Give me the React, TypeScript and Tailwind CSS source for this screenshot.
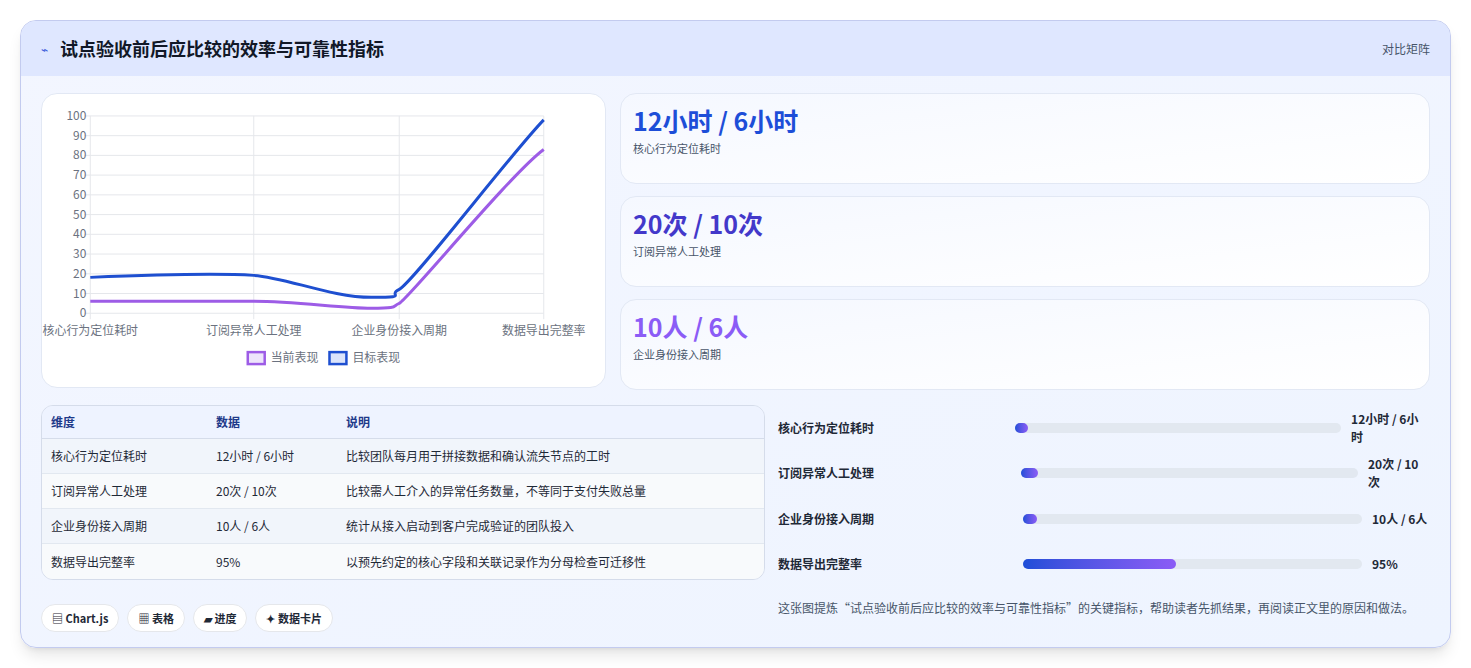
const font = { fontFamily: '"Noto Sans CJK SC", "Noto Sans", sans-serif' };

const stats = [
  { v: '12小时 / 6小时', l: '核心行为定位耗时', c: 'text-[#1d4ed8]' },
  { v: '20次 / 10次', l: '订阅异常人工处理', c: 'text-[#4338ca]' },
  { v: '10人 / 6人', l: '企业身份接入周期', c: 'text-[#8b5cf6]' },
];

const rows = [
  ['核心行为定位耗时', '12小时 / 6小时', '比较团队每月用于拼接数据和确认流失节点的工时'],
  ['订阅异常人工处理', '20次 / 10次', '比较需人工介入的异常任务数量，不等同于支付失败总量'],
  ['企业身份接入周期', '10人 / 6人', '统计从接入启动到客户完成验证的团队投入'],
  ['数据导出完整率', '95%', '以预先约定的核心字段和关联记录作为分母检查可迁移性'],
];

const bars = [
  { l: '核心行为定位耗时', v: '12小时 / 6小时', w: 4 },
  { l: '订阅异常人工处理', v: '20次 / 10次', w: 5 },
  { l: '企业身份接入周期', v: '10人 / 6人', w: 4 },
  { l: '数据导出完整率', v: '95%', w: 45 },
];

function Chart() {
  const y = (v: number) => 220 - 1.98 * v;
  const xs = [48, 212, 358, 503];
  const labels = ['核心行为定位耗时', '订阅异常人工处理', '企业身份接入周期', '数据导出完整率'];
  return (
    <svg viewBox="0 0 564 294" className="w-full h-full" style={font}>
      {[0, 10, 20, 30, 40, 50, 60, 70, 80, 90, 100].map((v) => (
        <g key={v}>
          <line x1={42} x2={503} y1={y(v)} y2={y(v)} stroke="#e5e7eb" />
          <text x={56 - 12} y={y(v) + 4} textAnchor="end" fontSize="12" fill="#6b7280">{v}</text>
        </g>
      ))}
      {xs.map((x, i) => (
        <g key={x}>
          <line x1={x} x2={x} y1={22} y2={226} stroke="#e5e7eb" />
          <text x={x} y={242} textAnchor="middle" fontSize="12" fill="#6b7280">{labels[i]}</text>
        </g>
      ))}
      <path d="M48 208 C120 208,170 208,212 208 S300 215,330 215 S350 213,358 210 S470 80,503 55.7" fill="none" stroke="#9d5ce6" strokeWidth="3" />
      <path d="M48 184 C120 181,180 180,212 182 S290 204,330 204 S345 202,358 196 S470 60,503 26" fill="none" stroke="#1e4fd0" strokeWidth="3" />
      <rect x={206} y={259} width={17} height={12} fill="#ede4fb" stroke="#9d5ce6" strokeWidth="2.5" />
      <text x={229} y={269} fontSize="12" fill="#6b7280">当前表现</text>
      <rect x={288} y={259} width={17} height={12} fill="#dbe4fb" stroke="#1e4fd0" strokeWidth="2.5" />
      <text x={311} y={269} fontSize="12" fill="#6b7280">目标表现</text>
    </svg>
  );
}

export default function App() {
  return (
    <div className="w-[1471px] h-[668px] bg-white p-5" style={font}>
      <div className="h-[628px] w-[1431px] rounded-2xl border border-[#c3cbef] bg-gradient-to-br from-[#f3f6ff] to-[#eef4ff] overflow-hidden shadow-lg">
        <div className="h-[55px] bg-[#dfe7ff] flex items-center justify-between px-5">
          <div className="flex items-center gap-3">
            <span className="text-[#3b5bdb] text-xs">⌁</span>
            <h1 className="text-[18px] font-bold text-[#111827]">试点验收前后应比较的效率与可靠性指标</h1>
          </div>
          <span className="text-xs text-[#475569]">对比矩阵</span>
        </div>
        <div className="px-5 pt-[17px] flex gap-[14px]">
          <div className="w-[565px] h-[295px] bg-white rounded-2xl border border-[#e2e8f4]">
            <Chart />
          </div>
          <div className="flex-1 flex flex-col gap-3">
            {stats.map((s) => (
              <div key={s.l} className="h-[91px] rounded-2xl border border-[#e2e8f4] bg-gradient-to-br from-[#f5f8ff] to-white px-3 pt-2">
                <div className={`text-[25px] font-bold leading-9 ${s.c}`}>{s.v}</div>
                <div className="text-[11px] text-[#475569] mt-0.5">{s.l}</div>
              </div>
            ))}
          </div>
        </div>
        <div className="px-5 pt-[15px] flex gap-[13px]">
          <div className="w-[724px]">
            <div className="rounded-xl border border-[#d5dcea] overflow-hidden text-[12px]">
              <div className="flex h-[33px] items-center bg-[#eef3ff] text-[#1e3a8a] font-semibold border-b border-[#d5dcea]">
                <div className="w-[174px] pl-[9px]">维度</div>
                <div className="w-[130px]">数据</div>
                <div>说明</div>
              </div>
              {rows.map((r, i) => (
                <div key={r[0]} className={`flex h-[35px] items-center text-[#1f2937] ${i < 3 ? 'border-b border-[#e2e8f0]' : ''} ${i % 2 ? 'bg-[#f8fafc]' : 'bg-[#f1f5fb]'}`}>
                  <div className="w-[174px] pl-[9px]">{r[0]}</div>
                  <div className="w-[130px]">{r[1]}</div>
                  <div>{r[2]}</div>
                </div>
              ))}
            </div>
            <div className="flex gap-2 mt-[24px] text-[11px] font-semibold text-[#1f2937]">
              {['▤ Chart.js', '▦ 表格', '▰ 进度', '✦ 数据卡片'].map((c) => (
                <span key={c} className="h-7 px-2.5 flex items-center rounded-full bg-white border border-[#e5e7eb]">{c}</span>
              ))}
            </div>
          </div>
          <div className="flex-1 text-[12px] text-[#1f2937]">
            {bars.map((b, i) => (
              <div key={b.l} className="flex items-center h-[45.5px] font-semibold">
                <div className="w-[238px]">{b.l}</div>
                <div className={`${i === 0 ? 'w-[328px]' : 'w-[339px] ml-[7px]'} h-[10px] rounded-full bg-[#e2e8f0]`}>
                  <div className="h-full rounded-full bg-gradient-to-r from-[#1d4ed8] to-[#8b5cf6] min-w-[13px]" style={{ width: `${b.w}%` }} />
                </div>
                <div className="ml-2.5">{b.v}</div>
              </div>
            ))}
            <p className="mt-[10px] text-[12px] leading-[22px] text-[#475569] pr-2">这张图提炼“试点验收前后应比较的效率与可靠性指标”的关键指标，帮助读者先抓结果，再阅读正文里的原因和做法。</p>
          </div>
        </div>
      </div>
    </div>
  );
}
